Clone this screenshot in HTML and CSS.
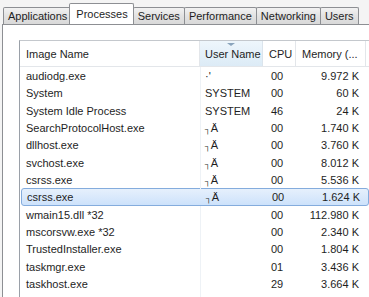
FILE: index.html
```html
<!DOCTYPE html>
<html lang="en">
<head>
	<meta charset="UTF-8" />
	<title>Processes</title>
	<link rel="stylesheet" href="styles.css">
</head>
<body>
<div class="tabs">
	<span class="tab">Applications</span>
	<span class="tab active">Processes</span>
	<span class="tab">Services</span>
	<span class="tab">Performance</span>
	<span class="tab">Networking</span>
	<span class="tab">Users</span>
</div>
<div class="panel">
	<div class="list">
		<div class="head">
			<span class="c-name">Image Name</span>
			<span class="c-user sorted"><i class="arrow"></i>User Name</span>
			<span class="c-cpu">CPU</span>
			<span class="c-mem">Memory (...</span>
		</div>
		<div class="row"><span class="c-name">audiodg.exe</span><span class="c-user">·'</span><span class="c-cpu">00</span><span class="c-mem">9.972 K</span></div>
		<div class="row"><span class="c-name">System</span><span class="c-user">SYSTEM</span><span class="c-cpu">00</span><span class="c-mem">60 K</span></div>
		<div class="row"><span class="c-name">System Idle Process</span><span class="c-user">SYSTEM</span><span class="c-cpu">46</span><span class="c-mem">24 K</span></div>
		<div class="row"><span class="c-name">SearchProtocolHost.exe</span><span class="c-user"><small>┐</small>Ä</span><span class="c-cpu">00</span><span class="c-mem">1.740 K</span></div>
		<div class="row"><span class="c-name">dllhost.exe</span><span class="c-user"><small>┐</small>Ä</span><span class="c-cpu">00</span><span class="c-mem">3.760 K</span></div>
		<div class="row"><span class="c-name">svchost.exe</span><span class="c-user"><small>┐</small>Ä</span><span class="c-cpu">00</span><span class="c-mem">8.012 K</span></div>
		<div class="row"><span class="c-name">csrss.exe</span><span class="c-user"><small>┐</small>Ä</span><span class="c-cpu">00</span><span class="c-mem">5.536 K</span></div>
		<div class="row selected"><span class="c-name">csrss.exe</span><span class="c-user"><small>┐</small>Ä</span><span class="c-cpu">00</span><span class="c-mem">1.624 K</span></div>
		<div class="row"><span class="c-name">wmain15.dll *32</span><span class="c-user"></span><span class="c-cpu">00</span><span class="c-mem">112.980 K</span></div>
		<div class="row"><span class="c-name">mscorsvw.exe *32</span><span class="c-user"></span><span class="c-cpu">00</span><span class="c-mem">2.340 K</span></div>
		<div class="row"><span class="c-name">TrustedInstaller.exe</span><span class="c-user"></span><span class="c-cpu">00</span><span class="c-mem">1.804 K</span></div>
		<div class="row"><span class="c-name">taskmgr.exe</span><span class="c-user"></span><span class="c-cpu">01</span><span class="c-mem">3.436 K</span></div>
		<div class="row"><span class="c-name">taskhost.exe</span><span class="c-user"></span><span class="c-cpu">29</span><span class="c-mem">3.664 K</span></div>
		<div class="row"><span class="c-name">msdtc.exe</span><span class="c-user"></span><span class="c-cpu">00</span><span class="c-mem">3.088 K</span></div>
	</div>
</div>
</body>
</html>
```

FILE: styles.css
```css
html,body{margin:0;height:100%;overflow:hidden;}
body{display:flex;flex-direction:column;background:#f4f4f4;font:11px/1 'Liberation Sans',Arial,sans-serif;color:#1e1e1e;}

.tabs{display:flex;align-items:flex-end;flex:none;height:24px;padding-left:3px;overflow:hidden;}
.tab{position:relative;display:block;height:16px;line-height:17px;padding:0 4px;margin-right:-1px;border:1px solid #8d8f93;border-bottom:none;border-radius:2px 2px 0 0;background:linear-gradient(#f2f2f2,#e2e2e2 50%,#d9d9d9);white-space:nowrap;}
.tab.active{z-index:1;height:21px;line-height:20px;margin:0 -1px -1px -2px;padding:0 5px 0 6px;background:#fff;}

.panel{flex:1;margin-left:2px;border-left:1px solid #8d8f93;border-top:1px solid #8d8f93;background:#fff;padding:15px 0 0 16px;overflow:hidden;}
.list{border-left:1px solid #9aa0a8;border-top:1px solid #c4c8cd;}

.head,.row{display:grid;grid-template-columns:180px 63px 33px 70px;white-space:nowrap;}
.head{height:25px;line-height:26px;border-bottom:1px solid #e3e6ea;}
.head span{padding-left:6px;border-right:1px solid #e3e6ea;overflow:hidden;}
.head .sorted{position:relative;background:linear-gradient(#eef6fc,#dcebf6);border-color:#dbe4ec;padding-left:5px;}
.arrow{position:absolute;left:27px;top:2px;width:0;height:0;border-left:4px solid transparent;border-right:4px solid transparent;border-top:3px solid #8aa4bc;}

.row{box-sizing:border-box;height:17.33px;line-height:18px;}
.row span{padding-left:6px;}
.row small{font-size:8px;line-height:1;}
.row .c-user{background:linear-gradient(90deg,#eef2f6 1px,transparent 1px);padding-left:5px;}
.row .c-cpu{padding-left:8px;}
.row .c-mem{text-align:right;padding-right:7px;}
.row.selected{margin-left:1px;grid-template-columns:179px 63px 33px 70px;line-height:16px;border:1px solid #84acdd;border-radius:3px;background:linear-gradient(#e6f0fc,#cde2fb);}
.row.selected .c-name{padding-left:5px;}
.row.selected .c-user{background:none;}
```
